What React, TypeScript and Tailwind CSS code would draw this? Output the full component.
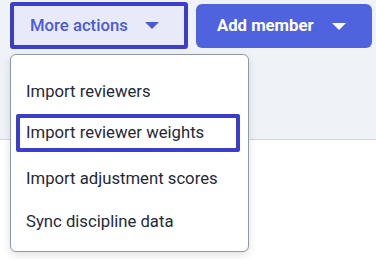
import React from "react";

function Caret({ className }: { className: string }) {
  return (
    <svg width="14" height="7" viewBox="0 0 14 7" className={className}>
      <path d="M0 0 L14 0 L7 7 Z" fill="currentColor" />
    </svg>
  );
}

export default function App() {
  return (
    <div
      className="relative w-[376px] h-[259px] overflow-hidden bg-white"
      style={{ fontFamily: "Roboto, 'Liberation Sans', sans-serif" }}
    >
      <div className="h-[140px] bg-[#eff2f7] border-b border-[#cfd6df]">
        <div className="flex items-start pt-[2px] pl-[10px] gap-[8px]">
          <button className="w-[178px] h-[47px] border-4 border-[#3b3ec8] bg-[#e9eaf9] rounded-[3px] flex items-center pl-[16px] text-[#4a5bd8] text-[16.7px] font-medium">
            <span>More actions</span>
            <Caret className="ml-[17px] text-[#4a5bd8]" />
          </button>
          <button className="mt-[2px] w-[176px] h-[44px] rounded-[6px] bg-[#4f63de] flex items-center pl-[21px] text-white text-[16.7px] font-bold">
            <span>Add member</span>
            <Caret className="ml-[18px] text-white" />
          </button>
        </div>
      </div>

      <div className="absolute left-[10px] top-[54px] w-[239px] h-[198px] bg-white border border-[#8f98a5] rounded-[6px] shadow-[0_3px_8px_rgba(0,0,0,0.12)] pt-[15px] text-[16.7px] text-[#1f2937]">
        <div className="h-[43px] flex items-center pl-[15px]">Import reviewers</div>
        <div className="h-[43px] ml-[5px] mr-[8px]">
          <div className="mt-[1px] h-[38px] border-4 border-[#3b3ec8] rounded-[2px] flex items-center pl-[6px]">
            Import reviewer weights
          </div>
        </div>
        <div className="h-[43px] flex items-center pl-[15px]">Import adjustment scores</div>
        <div className="h-[43px] flex items-center pl-[15px]">Sync discipline data</div>
      </div>
    </div>
  );
}
